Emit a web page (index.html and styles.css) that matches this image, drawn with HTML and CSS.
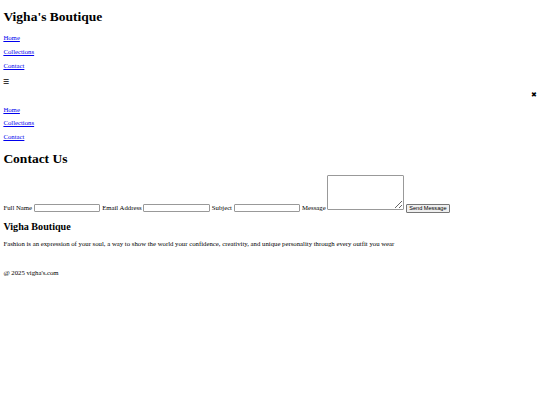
FILE: index.html
```html
<!DOCTYPE html>
<html>
<head>
<meta charset="utf-8">
<title>Vigha's Boutique</title>
<link rel="stylesheet" href="styles.css">
</head>
<body>
<header class="site-header">
  <h1 class="brand">Vigha's Boutique</h1>
  <nav class="nav">
    <p><a href="#">Home</a></p>
    <p><a href="#">Collections</a></p>
    <p><a href="#">Contact</a></p>
  </nav>
  <div class="menu-toggle">&#9776;</div>
  <div class="mobile-menu">
    <p class="close">&#10006;</p>
    <p><a href="#">Home</a></p>
    <p><a href="#">Collections</a></p>
    <p><a href="#">Contact</a></p>
  </div>
</header>
<section class="contact">
  <h1 class="title">Contact Us</h1>
  <form class="contact-form">
    <label>Full Name</label> <input class="field" type="text"> <label>Email Address</label> <input class="field" type="email"> <label>Subject</label> <input class="field" type="text"> <label>Message</label> <textarea class="message" rows="5"></textarea> <button class="send" type="button">Send Message</button>
  </form>
</section>
<footer class="footer">
  <h2 class="footer-title">Vigha Boutique</h2>
  <p>Fashion is an expression of your soul, a way to show the world your confidence, creativity, and unique personality through every outfit you wear</p>
  <br>
  <p class="copy">@ 2025 vigha's.com</p>
</footer>
</body>
</html>
```

FILE: styles.css
```css
body {
  margin: 3.375px;
  font-family: "Liberation Serif", "Times New Roman", serif;
  font-size: 6.75px;
  color: #000;
}
a {
  color: #0000ee;
}
.brand {
  font-size: 13.5px;
  margin: 5.9px 0 9px;
}
.title {
  font-size: 13.5px;
  margin: 11px 0 8px;
}
.menu-toggle {
  margin-top: 8.75px;
}
.close {
  text-align: right;
  line-height: 1;
  margin-top: 6.5px;
  margin-bottom: 6.75px;
}
.contact-form {
  margin: 0;
}
.field {
  box-sizing: border-box;
  width: 66.7px;
  height: 8.9px;
  padding: 0 1px;
  border: 0.85px solid #999;
  border-radius: 1px;
  font-size: 5.6px;
  background: #fff;
}
.message {
  box-sizing: border-box;
  width: 76.8px;
  height: 35px;
  padding: 1px;
  border: 0.85px solid #999;
  border-radius: 1px;
  font-size: 5.6px;
  resize: both;
}
.send {
  box-sizing: border-box;
  height: 9px;
  width: 44px;
  padding: 0;
  font-family: "Liberation Sans", Arial, sans-serif;
  font-size: 5.6px;
  color: #000;
  background: #efefef;
  border: 0.85px solid #767676;
  border-radius: 1px;
}
.footer {
  margin-top: 3px;
}
.footer-title {
  font-size: 10.125px;
  margin: 8.4px 0;
}
.copy {
  margin-top: 8px;
}
```
